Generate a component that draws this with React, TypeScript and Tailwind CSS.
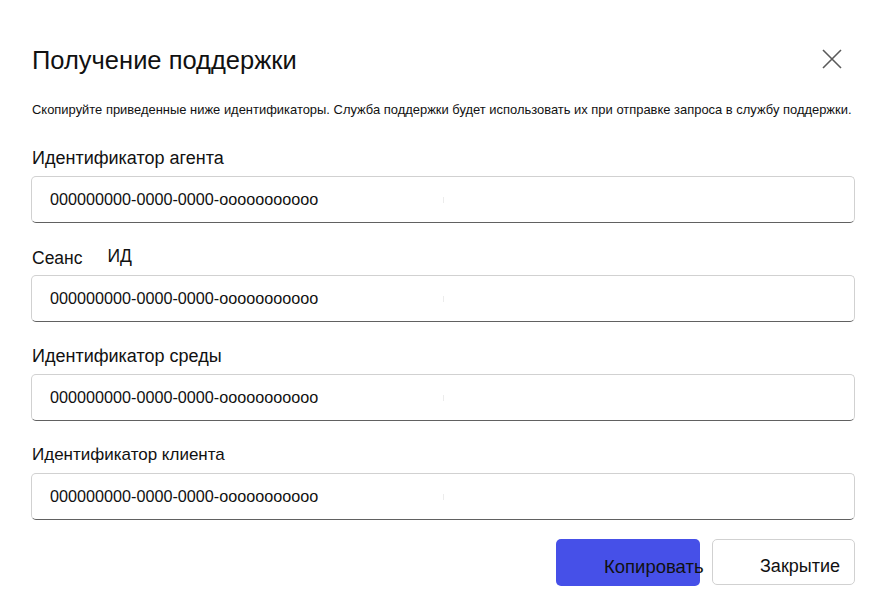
import React from "react";

const font = { fontFamily: '"Liberation Sans", Arial, sans-serif' };

function Field({ label, size = "text-[18px]", split = false }: { label: string; size?: string; split?: boolean }) {
  return (
    <div className="flex flex-col">
      <div className={`h-[20px] flex items-center pl-[1px] text-[#111] ${size}`}>
        {split ? (
          <>
            <span className="text-[17.5px] translate-y-[1px]">Сеанс</span>
            <span className="ml-[25px] text-[17.5px] -translate-y-[1px]">ИД</span>
          </>
        ) : (
          label
        )}
      </div>
      <div className="mt-[8px] h-[47px] rounded-[5px] border border-[#d1d1d1] border-b-[#616161] bg-white flex items-center pl-[18px] relative">
        <span className="text-[16.2px] text-[#111]">000000000-0000-0000-ooooooooooo</span>
        <span className="absolute left-[411px] top-[20px] w-[1px] h-[6px] bg-[#ececec]" />
      </div>
    </div>
  );
}

export default function App() {
  return (
    <div className="w-[886px] h-[614px] bg-white relative" style={font}>
      <div className="px-[31px] pt-[45px]">
        <div className="flex items-start justify-between">
          <h1 className="text-[25.5px] leading-[30px] text-[#111] pl-[1px]">Получение поддержки</h1>
          <button className="mr-[12px] mt-[3px] w-[22px] h-[22px] flex items-center justify-center">
            <svg width="20" height="20" viewBox="0 0 20 20" fill="none">
              <path d="M1 1L19 19M19 1L1 19" stroke="#5a5a5a" strokeWidth="1.6" />
            </svg>
          </button>
        </div>
        <p className="mt-[27px] text-[12.95px] leading-[16px] text-[#111] pl-[1px] whitespace-nowrap">
          Скопируйте приведенные ниже идентификаторы. Служба поддержки будет использовать их при отправке запроса в службу поддержки.
        </p>
        <div className="mt-[30px] flex flex-col gap-[24px]">
          <Field label="Идентификатор агента" />
          <Field label="Сеанс ИД" split />
          <Field label="Идентификатор среды" />
          <Field label="Идентификатор клиента" size="text-[17px]" />
        </div>
        <div className="mt-[19px] flex justify-end gap-[12px]">
          <button className="w-[144px] h-[47px] rounded-[5px] bg-[#4650e8] relative overflow-visible">
            <span className="absolute left-[48px] top-[14px] text-[18.5px] text-[#111] whitespace-nowrap">Копировать</span>
          </button>
          <button className="w-[143px] h-[46px] rounded-[5px] border border-[#d1d1d1] bg-white relative">
            <span className="absolute left-[47px] top-[13px] text-[18px] text-[#111] whitespace-nowrap">Закрытие</span>
          </button>
        </div>
      </div>
    </div>
  );
}
